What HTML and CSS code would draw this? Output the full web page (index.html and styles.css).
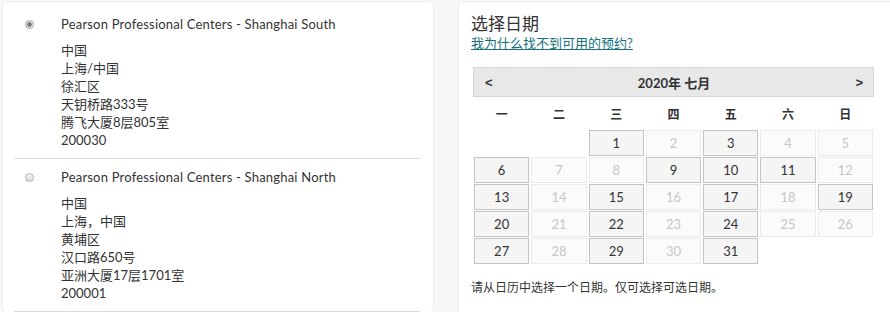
FILE: index.html
```html
<!DOCTYPE html>
<html lang="zh-CN">
<head>
    <meta charset="UTF-8">
    <meta name="viewport" content="width=device-width, initial-scale=1.0">
    <title>选择考试中心和日期</title>
    <link rel="stylesheet" href="styles.css">
</head>
<body>
    <div class="page">
        <div class="card centers">
            <div class="center-item">
                <span class="radio checked"></span>
                <div class="center-info">
                    <div class="center-name">Pearson Professional Centers - Shanghai South</div>
                    <div class="address">
                        中国<br>
                        上海/中国<br>
                        徐汇区<br>
                        天钥桥路333号<br>
                        腾飞大厦8层805室<br>
                        200030
                    </div>
                </div>
            </div>
            <div class="center-item">
                <span class="radio"></span>
                <div class="center-info">
                    <div class="center-name">Pearson Professional Centers - Shanghai North</div>
                    <div class="address">
                        中国<br>
                        上海，中国<br>
                        黄埔区<br>
                        汉口路650号<br>
                        亚洲大厦17层1701室<br>
                        200001
                    </div>
                </div>
            </div>
        </div>

        <div class="card dates">
            <h2>选择日期</h2>
            <a href="#" class="help-link">我为什么找不到可用的预约?</a>

            <div class="calendar">
                <div class="cal-head">
                    <span class="cal-nav">&lt;</span>
                    <span class="cal-title">2020年 七月</span>
                    <span class="cal-nav">&gt;</span>
                </div>
                <div class="cal-weekdays">
                    <span>一</span><span>二</span><span>三</span><span>四</span><span>五</span><span>六</span><span>日</span>
                </div>
                <div class="cal-days">
                    <span class="empty"></span>
                    <span class="empty"></span>
                    <span class="day open">1</span>
                    <span class="day">2</span>
                    <span class="day open">3</span>
                    <span class="day">4</span>
                    <span class="day">5</span>
                    <span class="day open">6</span>
                    <span class="day">7</span>
                    <span class="day">8</span>
                    <span class="day open">9</span>
                    <span class="day open">10</span>
                    <span class="day open">11</span>
                    <span class="day">12</span>
                    <span class="day open">13</span>
                    <span class="day">14</span>
                    <span class="day open">15</span>
                    <span class="day">16</span>
                    <span class="day open">17</span>
                    <span class="day">18</span>
                    <span class="day open">19</span>
                    <span class="day open">20</span>
                    <span class="day">21</span>
                    <span class="day open">22</span>
                    <span class="day">23</span>
                    <span class="day open">24</span>
                    <span class="day">25</span>
                    <span class="day">26</span>
                    <span class="day open">27</span>
                    <span class="day">28</span>
                    <span class="day open">29</span>
                    <span class="day">30</span>
                    <span class="day open">31</span>
                </div>
            </div>

            <p class="hint">请从日历中选择一个日期。仅可选择可选日期。</p>
        </div>
    </div>
</body>
</html>
```

FILE: styles.css
```css
body {
    margin: 0;
    background-color: #f7f7f7;
    font-family: Lato, "Noto Sans CJK SC", sans-serif;
    color: #333;
    overflow: hidden;
}
.page {
    display: flex;
    align-items: flex-start;
    gap: 24px;
    padding: 1px 0 0 2px;
}
.card {
    background: white;
    border: 1px solid #ededed;
    border-radius: 4px;
}
.centers {
    width: 432px;
    flex-shrink: 0;
    padding: 4px 13px 0 11px;
    box-sizing: border-box;
}
.center-item {
    display: flex;
    padding: 9px 0 9px 0;
    border-bottom: 1px solid #dcdcdc;
}
.radio {
    width: 9px;
    height: 9px;
    margin: 5px 27px 0 11px;
    border: 1px solid #b5b5b5;
    border-radius: 50%;
    background: linear-gradient(#f4f4f4, #dcdcdc);
    box-sizing: border-box;
    flex-shrink: 0;
}
.radio.checked {
    background: radial-gradient(circle, #7a7a7a 0, #7a7a7a 2px, #e6e6e6 2.5px);
    border-color: #a8a8a8;
}
.center-name {
    font-size: 13px;
    line-height: 18px;
    letter-spacing: 0.2px;
    margin-bottom: 8px;
}
.address {
    font-size: 13px;
    line-height: 18px;
}
.dates {
    width: 440px;
    flex-shrink: 0;
    padding: 12px 0 40px 12px;
}
h2 {
    margin: 0;
    font-size: 17px;
    font-weight: normal;
    line-height: 20px;
}
.help-link {
    display: block;
    width: fit-content;
    font-size: 13px;
    line-height: 18px;
    color: #17707a;
}
.calendar {
    width: 401px;
    margin: 15px 0 0 2px;
}
.cal-head {
    display: flex;
    justify-content: space-between;
    align-items: center;
    height: 30px;
    padding: 0 10px 0 11px;
    background-color: #e8e8e8;
    border: 1px solid #d6d6d6;
    box-sizing: border-box;
    font-size: 13px;
}
.cal-nav {
    font-weight: bold;
    font-family: "Liberation Sans", sans-serif;
    font-size: 13px;
}
.cal-title {
    font-weight: bold;
}
.cal-weekdays {
    display: grid;
    grid-template-columns: repeat(7, 1fr);
    gap: 2px;
    padding: 0 1px;
    margin: 3px 0 4px;
    height: 26px;
    align-items: center;
    text-align: center;
    font-size: 12px;
    font-weight: bold;
}
.cal-days {
    display: grid;
    grid-template-columns: repeat(7, 1fr);
    grid-auto-rows: 26px;
    column-gap: 2px;
    row-gap: 1px;
    padding: 0 1px;
}
.day {
    display: flex;
    align-items: center;
    justify-content: center;
    font-size: 13px;
    color: #c6c6c6;
    background-color: #fbfbfb;
    border: 1px solid #ebebeb;
}
.day.open {
    color: #333;
    background-color: #f5f5f5;
    border-color: #c3c3c3;
}
.hint {
    margin: 15px 0 0;
    font-size: 12px;
    line-height: 18px;
}
```
